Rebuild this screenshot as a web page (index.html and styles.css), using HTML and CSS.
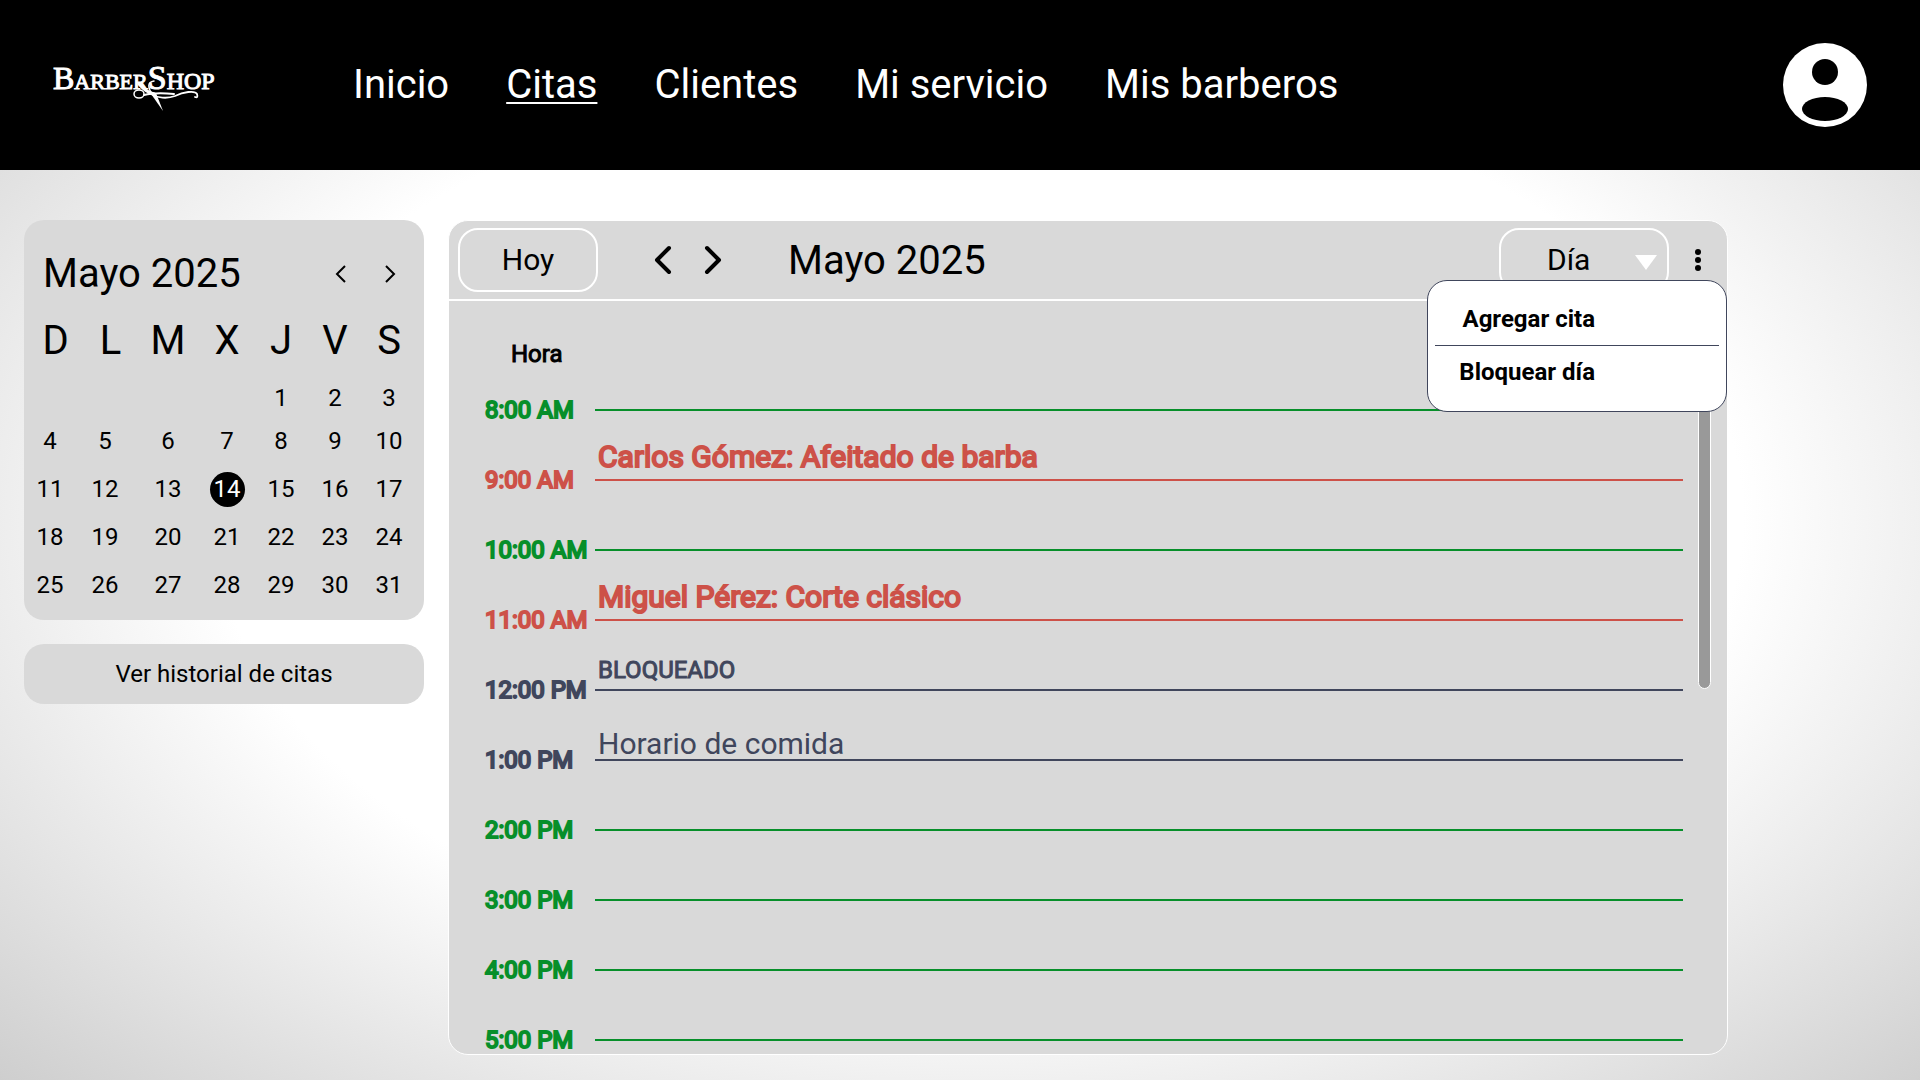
FILE: index.html
```html
<!DOCTYPE html>
<html lang="es">
<head>
<meta charset="utf-8">
<title>BarberShop - Citas</title>
<meta name="viewport" content="width=device-width, initial-scale=1">
<link rel="stylesheet" href="styles.css">
</head>
<body>
<header class="topbar">
  <a class="logo" href="#" aria-label="BarberShop">
    <svg viewBox="0 0 170 70" width="170" height="70">
      <text class="logo-text" x="0" y="39"><tspan font-size="32">B</tspan><tspan font-size="22">ARBER</tspan><tspan font-size="34">S</tspan><tspan font-size="24">HOP</tspan></text>
      <g fill="none" stroke="#fff" stroke-linecap="round">
        <ellipse cx="86" cy="44" rx="5" ry="4" stroke-width="1.5"/>
        <path d="M91 45C99 43 110 43 121 44" stroke-width="2"/>
        <path d="M98 44C104 48 114 49 122 46C130 42 142 40 144 44C145 47 144 48 142 47" stroke-width="1.8"/>
        <path d="M86 34C91 40 96 43 101 44" stroke-width="3"/>
        <path d="M101 31C94 32 95 38 99 44" stroke-width="1.5"/>
      </g>
      <path d="M96 41L103 43L110 61Z" fill="#fff"/>
    </svg>
  </a>
  <nav class="nav" aria-label="Principal">
    <a href="#">Inicio</a>
    <a href="#" class="active" aria-current="page">Citas</a>
    <a href="#">Clientes</a>
    <a href="#">Mi servicio</a>
    <a href="#">Mis barberos</a>
  </nav>
  <button class="profile" type="button" aria-label="Perfil">
    <svg viewBox="0 0 84 84" width="84" height="84">
      <circle cx="42" cy="42" r="42" fill="#fff"/>
      <circle cx="42" cy="29" r="13"/>
      <ellipse cx="42" cy="66" rx="23" ry="12"/>
    </svg>
  </button>
</header>

<main class="page">
  <aside class="sidebar">
    <section class="month">
      <div class="month-head">
        <h2>Mayo 2025</h2>
        <button type="button" aria-label="Mes anterior"><svg viewBox="0 0 12 18" width="12" height="18"><path d="M10 1L2 9L10 17"/></svg></button>
        <button type="button" aria-label="Mes siguiente"><svg viewBox="0 0 12 18" width="12" height="18"><path d="M2 1L10 9L2 17"/></svg></button>
      </div>
      <table class="days">
        <colgroup><col class="c-52"><col class="c-58"><col class="c-68"><col class="c-50"><col class="c-58"><col class="c-50"><col class="c-58"></colgroup>
        <thead><tr><th>D</th><th>L</th><th>M</th><th>X</th><th>J</th><th>V</th><th>S</th></tr></thead>
        <tbody>
          <tr class="short"><td></td><td></td><td></td><td></td><td>1</td><td>2</td><td>3</td></tr>
          <tr><td>4</td><td>5</td><td>6</td><td>7</td><td>8</td><td>9</td><td>10</td></tr>
          <tr><td>11</td><td>12</td><td>13</td><td><span class="today">14</span></td><td>15</td><td>16</td><td>17</td></tr>
          <tr><td>18</td><td>19</td><td>20</td><td>21</td><td>22</td><td>23</td><td>24</td></tr>
          <tr><td>25</td><td>26</td><td>27</td><td>28</td><td>29</td><td>30</td><td>31</td></tr>
        </tbody>
      </table>
    </section>
    <button class="history" type="button">Ver historial de citas</button>
  </aside>

  <section class="agenda">
    <div class="toolbar">
      <button class="pill today-btn" type="button">Hoy</button>
      <div class="arrows">
        <button type="button" aria-label="Anterior"><svg viewBox="0 0 18 30" width="18" height="30"><path d="M15 3L3 15L15 27"/></svg></button>
        <button type="button" aria-label="Siguiente"><svg viewBox="0 0 18 30" width="18" height="30"><path d="M3 3L15 15L3 27"/></svg></button>
      </div>
      <h1>Mayo 2025</h1>
      <div class="view">
        <select class="pill" aria-label="Vista"><option>Día</option></select>
        <svg class="caret" viewBox="0 0 22 15" width="22" height="15"><path d="M0 0H22L11 15Z" fill="#fff"/></svg>
      </div>
      <div class="more">
        <button type="button" aria-label="Más opciones" aria-expanded="true"><svg viewBox="0 0 6 22" width="6" height="22"><circle cx="3" cy="3" r="3"/><circle cx="3" cy="11" r="3"/><circle cx="3" cy="19" r="3"/></svg></button>
        <div class="menu">
          <button type="button">Agregar cita</button>
          <button type="button">Bloquear día</button>
        </div>
      </div>
    </div>
    <div class="schedule">
      <div class="slots">
        <p class="label">Hora</p>
        <ol>
          <li class="free"><time>8:00 AM</time><span class="slot"></span></li>
          <li class="booked"><time>9:00 AM</time><span class="slot">Carlos Gómez: Afeitado de barba</span></li>
          <li class="free"><time>10:00 AM</time><span class="slot"></span></li>
          <li class="booked"><time>11:00 AM</time><span class="slot">Miguel Pérez: Corte clásico</span></li>
          <li class="blocked"><time>12:00 PM</time><span class="slot">BLOQUEADO</span></li>
          <li class="lunch"><time>1:00 PM</time><span class="slot">Horario de comida</span></li>
          <li class="free"><time>2:00 PM</time><span class="slot"></span></li>
          <li class="free"><time>3:00 PM</time><span class="slot"></span></li>
          <li class="free"><time>4:00 PM</time><span class="slot"></span></li>
          <li class="free"><time>5:00 PM</time><span class="slot"></span></li>
        </ol>
      </div>
      <div class="scrollbar"><div class="thumb"></div></div>
    </div>
  </section>
</main>
</body>
</html>
```
FILE: styles.css
```css
* { box-sizing: border-box; }
body {
  margin: 0;
  height: 100vh;
  min-height: 800px;
  display: flex;
  flex-direction: column;
  background: radial-gradient(ellipse 71vw 75vh at 51% 48%, #fff 56%, #cecece 100%);
  font-family: Roboto, "Liberation Sans", sans-serif;
  font-size: 24px;
  color: #000;
}
h1, h2, p, ol { margin: 0; padding: 0; }
h1, h2 { font-size: 40px; font-weight: 400; line-height: 48px; }
button, select { font: inherit; color: inherit; background: none; border: 0; padding: 0; cursor: pointer; }
svg { display: block; }

.topbar {
  flex: none;
  display: flex;
  align-items: center;
  height: 170px;
  padding: 0 53px;
  background: #000;
  color: #fff;
}
.logo { width: 300px; }
.logo-text { fill: #fff; stroke: #fff; stroke-width: 1px; font-family: "Liberation Serif", serif; }
.nav { display: flex; gap: 57px; font-size: 40px; line-height: 48px; }
.nav a { color: inherit; text-decoration: none; }
.nav .active { text-decoration: underline; text-decoration-thickness: 2px; text-underline-offset: 4px; }
.profile { margin-left: auto; }

.page {
  flex: 1;
  min-height: 0;
  display: flex;
  gap: 24px;
  padding: 50px 10vw 25px 24px;
}
.sidebar { flex: none; width: 400px; display: flex; flex-direction: column; gap: 24px; }
.month, .history { background: #d9d9d9; border-radius: 20px; }
.month { padding: 26px 6px 11px 0; }
.month-head { display: flex; align-items: center; height: 55px; padding: 0 22px 0 19px; gap: 37px; }
.month-head h2 { flex: 1; }
.month-head path { fill: none; stroke: #000; stroke-width: 2; }
.days { border-collapse: collapse; table-layout: fixed; width: 394px; text-align: center; }
.days th, .days td { padding: 0; height: 48px; line-height: 28px; }
.days th { height: 78px; padding-top: 2px; font-size: 40px; font-weight: 400; }
.days th:nth-child(-n+2) { padding-left: 11px; }
.days .short td { height: 38px; }
.c-50 { width: 50px; }
.c-52 { width: 52px; }
.c-58 { width: 58px; }
.c-68 { width: 68px; }
.today { display: block; width: 35px; margin: 0 auto; line-height: 35px; border-radius: 50%; background: #000; color: #fff; }
.history { height: 60px; }

.agenda {
  flex: 1;
  min-width: 0;
  display: flex;
  flex-direction: column;
  background: #d9d9d9;
  border: 1px solid #fff;
  border-radius: 20px;
}
.toolbar { flex: none; display: flex; align-items: center; height: 80px; padding: 0 26px 0 9px; border-bottom: 2px solid #fff; }
.toolbar h1 { line-height: 50px; padding-top: 2px; }
.pill { height: 64px; border: 2px solid #fff; border-radius: 20px; font-size: 30px; padding-bottom: 2px; }
.today-btn { width: 140px; }
.arrows { display: flex; gap: 32px; margin: 0 66px 0 56px; }
.arrows path { fill: none; stroke: #000; stroke-width: 4; stroke-linecap: round; stroke-linejoin: round; }
.view { position: relative; margin-left: auto; }
.view select { appearance: none; width: 170px; padding: 0 0 2px 46px; }
.caret { position: absolute; right: 12px; top: 27px; pointer-events: none; }
.more { position: relative; display: flex; margin-left: 26px; }
.menu {
  position: absolute;
  z-index: 2;
  top: 31px;
  right: -26px;
  width: 300px;
  height: 132px;
  padding: 11px 7px;
  background: #fff;
  border: 1px solid #40465c;
  border-radius: 20px;
}
.menu button { display: block; width: 100%; height: 53px; padding-right: 124px; text-align: right; font-weight: 700; }
.menu button + button { border-top: 1px solid #40465c; }

.schedule { flex: 1; min-height: 0; display: flex; padding: 36px 16px 0 36px; overflow: hidden; }
.slots { flex: 1; }
.label { height: 38px; line-height: 34px; padding-left: 26px; -webkit-text-stroke: 1px; }
.slots ol { list-style: none; }
.slots li { display: grid; grid-template-columns: 110px 1fr; align-items: center; height: 70px; }
.slots time { -webkit-text-stroke: 2px; }
.slot { align-self: start; height: 36px; padding-left: 3px; border-bottom: 2px solid; font-size: 30px; line-height: 24px; }
.free { color: #078f2a; }
.booked { color: #cd5148; }
.blocked, .lunch { color: #40465c; }
.booked .slot { -webkit-text-stroke: 2px; }
.blocked .slot { font-size: 24px; line-height: 30px; -webkit-text-stroke: 1px; }
.lunch .slot { line-height: 38px; }
.scrollbar { flex: none; width: 13px; margin-left: 15px; }
.thumb { height: 352px; background: #999; border: 1px solid #fff; border-radius: 7px; }
```
